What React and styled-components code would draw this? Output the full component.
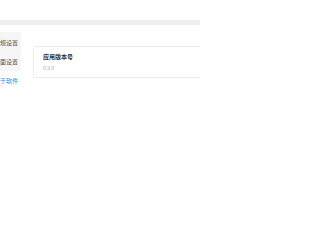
import { styled, createGlobalStyle } from "styled-components";

const GlobalStyle = createGlobalStyle`
  html, body {
    margin: 0;
    padding: 0;
    background: #ffffff;
    font-family: "Noto Sans CJK SC", "Noto Sans", sans-serif;
  }
  #root {
    width: 200px;
    height: 200px;
    overflow: hidden;
  }
`;

const menu = [
  { label: "常规设置", active: false },
  { label: "界面设置", active: false },
  { label: "关于软件", active: true },
];

function App() {
  return (
    <>
      <GlobalStyle />
      <Page>
        <TitleBar />
        <Divider />
        <Body>
          <Sidebar>
            {menu.map((item) => (
              <MenuItem key={item.label} $active={item.active}>
                {item.label}
              </MenuItem>
            ))}
          </Sidebar>
          <Content>
            <Card>
              <CardTitle>应用版本号</CardTitle>
              <CardValue>0.9.8</CardValue>
            </Card>
          </Content>
        </Body>
      </Page>
    </>
  );
}

export default App;

const Page = styled.div`
  width: 200px;
  height: 200px;
  display: flex;
  flex-direction: column;
  overflow: hidden;
`;

const TitleBar = styled.div`
  height: 20px;
  background: #ffffff;
`;

const Divider = styled.div`
  height: 5px;
  background: #efefef;
`;

const Body = styled.div`
  display: flex;
  align-items: flex-start;
  padding-top: 7px;
`;

const Sidebar = styled.div`
  width: 21px;
  flex-shrink: 0;
  display: flex;
  flex-direction: column;
  padding-top: 1px;
  background: #f6f6f6;
  overflow: hidden;
`;

const MenuItem = styled.div`
  height: 19px;
  display: flex;
  align-items: center;
  justify-content: flex-end;
  padding-right: 3px;
  white-space: nowrap;
  font-size: 6px;
  color: ${(p) => (p.$active ? "#1890ff" : "#555555")};
  background: ${(p) => (p.$active ? "#ffffff" : "transparent")};
`;

const Content = styled.div`
  flex: 1;
  padding: 14px 0 0 12px;
`;

const Card = styled.div`
  width: 200px;
  border: 1px solid #ececec;
  border-radius: 3px;
  padding: 6px 9px;
  display: flex;
  flex-direction: column;
`;

const CardTitle = styled.div`
  font-size: 6px;
  line-height: 8px;
  font-weight: 700;
  color: #333333;
`;

const CardValue = styled.div`
  margin-top: 3px;
  font-size: 5px;
  line-height: 7px;
  color: #aaaaaa;
`;
